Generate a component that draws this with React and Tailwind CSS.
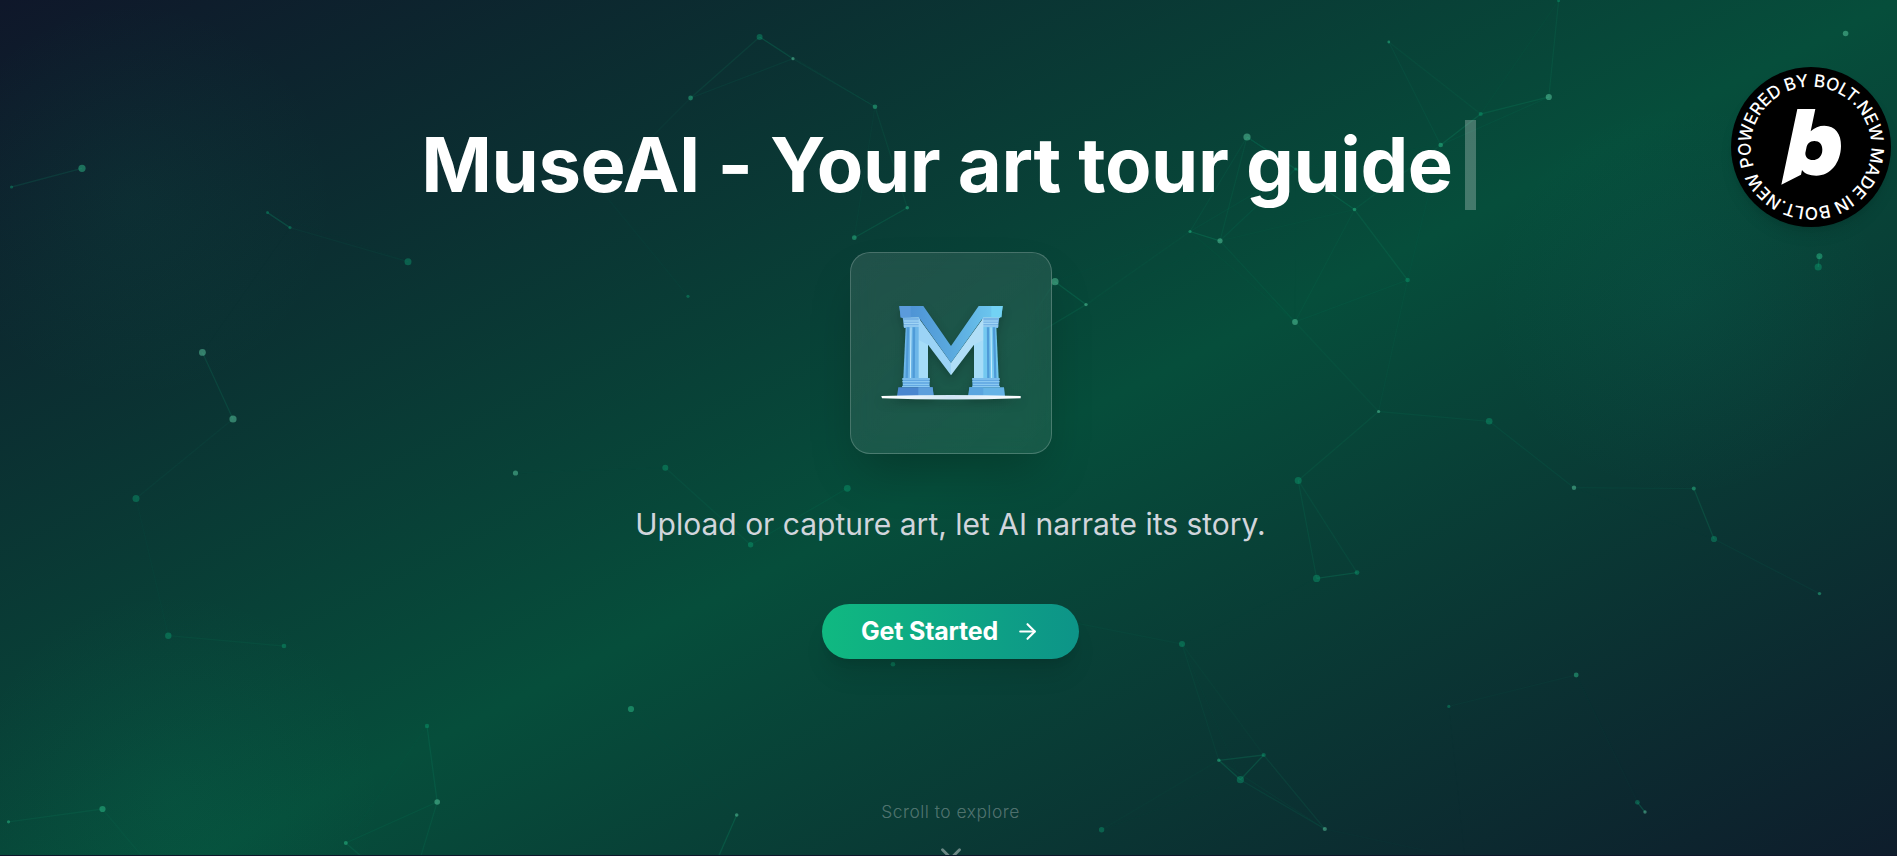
import { ArrowRight, ChevronDown } from "lucide-react";

const MINT = "#6ee7b7";
const GREEN = "#34d399";
const EMERALD = "#10b981";

// x, y, radius, color
const particles = [
  [11.5, 187, 1.6, EMERALD],
  [82, 168.3, 3.6, GREEN],
  [267.5, 212.6, 1.5, EMERALD],
  [290, 227.6, 1.6, EMERALD],
  [408, 261.7, 3.5, EMERALD],
  [202.4, 352.4, 3.4, MINT],
  [233, 419, 3.6, MINT],
  [136, 498.4, 3.5, EMERALD],
  [168.3, 635.7, 3.2, EMERALD],
  [284, 646, 2.3, EMERALD],
  [515.5, 473, 2.6, MINT],
  [631, 709, 3.1, GREEN],
  [427, 726, 2.2, EMERALD],
  [437.2, 802, 2.8, MINT],
  [345.8, 843, 2, GREEN],
  [102.5, 809, 3.1, GREEN],
  [8.5, 821.8, 1.6, GREEN],
  [408.6, 897, 2, EMERALD],
  [186, 909, 2, EMERALD],
  [759.6, 37, 3, EMERALD],
  [793, 58.7, 1.6, MINT],
  [690.6, 98, 2.4, GREEN],
  [875, 106.7, 2.3, GREEN],
  [907.3, 207.7, 1.8, GREEN],
  [854.3, 237.7, 2.4, GREEN],
  [688, 296.3, 1.6, EMERALD],
  [600, 189, 2, EMERALD],
  [1247, 137, 3.6, MINT],
  [1190, 231.5, 1.6, GREEN],
  [1220, 240.8, 2.6, MINT],
  [1055, 281.7, 3.6, MINT],
  [1086, 304.6, 1.7, MINT],
  [1010, 350, 2, EMERALD],
  [665.3, 467.7, 3, EMERALD],
  [847.3, 488.3, 3.4, EMERALD],
  [750.6, 544.7, 2.7, EMERALD],
  [893, 664.3, 2.3, EMERALD],
  [1182, 644, 3, EMERALD],
  [1050, 618, 2, EMERALD],
  [1218.8, 760.3, 1.7, GREEN],
  [1263.7, 755, 2.1, EMERALD],
  [1240.4, 779.7, 3.6, EMERALD],
  [1101.6, 829.7, 2.7, EMERALD],
  [736.7, 815, 1.8, MINT],
  [702, 893, 2, EMERALD],
  [698, 905, 2, EMERALD],
  [1388.8, 42, 1.4, GREEN],
  [1548.8, 97, 3.1, MINT],
  [1480.7, 114, 2.1, EMERALD],
  [1440.7, 145, 2.3, GREEN],
  [1558.6, 0.7, 1.5, EMERALD],
  [1845.6, 33.5, 2.8, MINT],
  [1295.8, 169, 1.6, EMERALD],
  [1354.5, 209.5, 1.8, GREEN],
  [1407.6, 280, 2.3, EMERALD],
  [1295, 322, 2.9, MINT],
  [1378.6, 411.5, 1.6, MINT],
  [1489.2, 421.3, 3.3, EMERALD],
  [1819.4, 256.3, 3, GREEN],
  [1818.2, 267, 3.6, EMERALD],
  [1298.2, 480.4, 3.5, EMERALD],
  [1316.6, 578.4, 3.6, EMERALD],
  [1357, 572.6, 2.4, EMERALD],
  [1574, 487.7, 2.2, MINT],
  [1693.8, 488.6, 2, GREEN],
  [1714, 539, 3.1, EMERALD],
  [1819.5, 593.6, 1.7, GREEN],
  [1576.2, 675, 2.4, GREEN],
  [1448.8, 706.4, 1.6, EMERALD],
  [1637.4, 802.3, 2.4, EMERALD],
  [1645, 812, 1.7, MINT],
  [1324.8, 829, 2.1, MINT],
  [1465, 859, 2, EMERALD],
];

const MAX_DISTANCE = 158;

const links = [];
particles.forEach(([x1, y1], i) => {
  particles.slice(i + 1).forEach(([x2, y2]) => {
    const d = Math.hypot(x1 - x2, y1 - y2);
    if (d < MAX_DISTANCE) {
      links.push({ x1, y1, x2, y2, opacity: 0.24 * (1 - d / MAX_DISTANCE) });
    }
  });
});

function ParticleField() {
  return (
    <svg className="absolute inset-0 h-full w-full" aria-hidden="true">
      {links.map(({ opacity, ...line }, i) => (
        <line key={i} {...line} stroke={EMERALD} strokeWidth="1.3" strokeOpacity={opacity} />
      ))}
      {particles.map(([x, y, r, color], i) => (
        <circle
          key={i}
          cx={x}
          cy={y}
          r={r}
          fill={color}
          fillOpacity={color === EMERALD ? 0.34 : 0.42}
        />
      ))}
    </svg>
  );
}

function Backdrop() {
  return (
    <div className="absolute inset-x-0 top-0 h-[960px] bg-[linear-gradient(to_bottom_right,#0f172a,#064e3b,#0f172a)]">
      <div className="absolute -left-[65px] top-0 h-[400px] w-[400px] rounded-full bg-[radial-gradient(closest-side,rgba(16,185,129,0.05),transparent)]" />
      <div className="absolute -left-[36px] top-[590px] h-[420px] w-[420px] rounded-full bg-[radial-gradient(closest-side,rgba(16,185,129,0.06),transparent)]" />
      <div className="absolute left-[1485px] top-[100px] h-[400px] w-[400px] rounded-full bg-[radial-gradient(closest-side,rgba(20,184,166,0.05),transparent)]" />
    </div>
  );
}

function Pillar({ fill }) {
  return (
    <>
      <path d="M188 232H240V264H192Z" fill="#78b4e6" />
      <path d="M186 232H240M192 243H237M192 250H238M191 258H238" stroke="#a9dcf8" strokeWidth="3" />
      <path d="M197 261H238L264 318V414H190Z" fill={fill} />
      <path d="M204 262L200 414M222 262L221 414" stroke="#4f9bd8" strokeWidth="7" />
      <path d="M213 262L211 414" stroke="#c4ecfd" strokeWidth="3" />
      <path d="M236 300H264V414H236Z" fill="#a5dcf8" />
      <path d="M188 414H269V442H188Z" fill="#62a8e2" />
      <path d="M186 417H270M187 425H269M189 433H267M186 440H269" stroke="#93d0f5" strokeWidth="3" />
    </>
  );
}

function MuseLogo() {
  return (
    <svg
      viewBox="120 198 426 282"
      className="h-[94px] w-[142px] overflow-visible drop-shadow-[0_4px_5px_rgba(0,0,0,0.2)]"
    >
      <defs>
        <linearGradient id="beam" x1="178" x2="488" y1="0" y2="0" gradientUnits="userSpaceOnUse">
          <stop offset="0" stopColor="#4b8ed3" />
          <stop offset="0.5" stopColor="#5aa9de" />
          <stop offset="1" stopColor="#70cdf2" />
        </linearGradient>
        <linearGradient id="ground" x1="0" x2="1" y1="0" y2="0">
          <stop offset="0" stopColor="#ffffff" />
          <stop offset="0.5" stopColor="#cfe6f6" />
          <stop offset="1" stopColor="#ffffff" />
        </linearGradient>
      </defs>
      <Pillar fill="#6db6e8" />
      <g transform="translate(666 0) scale(-1 1)">
        <Pillar fill="#74c8f0" />
      </g>
      {/* light underside of the V */}
      <path d="M236 234L333 368V406L264 314L236 300Z" fill="#9bd3f6" />
      <path d="M430 234L333 368V406L402 314L430 300Z" fill="#b0def7" />
      {/* beam */}
      <path
        d="M178 198H250L333 318L416 198H488L484 232H430L333 368L236 232L182 233Z"
        fill="url(#beam)"
      />
      <path d="M178 198H212V232H182Z" fill="#5b9bdc" />
      <path d="M454 198H488L484 232H454Z" fill="#72d2f4" />
      {/* plinths */}
      <path d="M175 442H278L281 468H171Z" fill="#4a86cf" />
      <path d="M235 442H278L281 468H235Z" fill="#5d9fdc" />
      <path d="M388 442H492L495 468H385Z" fill="#65b3e6" />
      <path d="M388 442H430V468H385Z" fill="#5aa5df" />
      <path d="M124 468Q330 462 542 468V475Q330 482 126 475Z" fill="url(#ground)" />
    </svg>
  );
}

function BoltBadge() {
  return (
    <a
      href="#"
      aria-label="Powered by Bolt.new"
      className="absolute right-[6px] top-[67px] z-10 h-40 w-40 rounded-full bg-black shadow-lg"
    >
      <svg viewBox="-240 -240 480 480" className="h-full w-full">
        <defs>
          <path id="ring" d="M-171 58A180.5 180.5 0 1 1 171 -58A180.5 180.5 0 1 1 -171 58" />
        </defs>
        <text
          fill="#fff"
          fontSize="52"
          fontWeight="550"
          className="font-['Inter',sans-serif]"
        >
          <textPath href="#ring" textLength="1120" lengthAdjust="spacing">
            POWERED BY BOLT.NEW MADE IN BOLT.NEW
          </textPath>
        </text>
        <path
          transform="translate(-342 -321)"
          fill="#fff"
          fillRule="evenodd"
          d="M301 207H355L341 274Q358 257 382 257C415 257 433 282 432 318C431 369 400 407 358 407C338 407 323 401 315 390L312 404L253 434ZM352 303C338 303 330 312 328 325L325 339C325 353 334 360 347 360C364 360 376 347 376 329C376 313 367 303 352 303Z"
        />
      </svg>
    </a>
  );
}

export default function App() {
  return (
    <div className="h-screen overflow-hidden bg-slate-900 font-['Inter',sans-serif]">
      <section className="relative h-[855px] overflow-hidden">
        <Backdrop />
        <ParticleField />
        <BoltBadge />

        <div className="relative flex flex-col items-center pl-1 pt-[120px]">
          <h1 className="mr-1 flex items-center text-[75.9px] font-bold leading-[88px] tracking-[-0.42px] text-white">
            <span className="-mt-0.5">MuseAI - Your art tour guide</span>
            <span className="ml-3 h-[90px] w-[11px] bg-white/25" />
          </h1>

          <div className="mt-[42px] flex h-[202px] w-[202px] items-center justify-center rounded-[20px] border border-white/20 bg-linear-to-br from-white/10 to-white/[0.07] shadow-2xl backdrop-blur-md">
            <MuseLogo />
          </div>

          <p className="mt-[50px] text-[30px] leading-10 text-gray-300">
            Upload or capture art, let AI narrate its story.
          </p>

          <button className="mt-[60px] flex h-[55px] w-[257px] items-center justify-center gap-[17px] rounded-full bg-[linear-gradient(to_right,#10b981,#0d9488)] text-[25px] font-bold tracking-[-0.2px] text-white shadow-xl">
            Get Started
            <ArrowRight size={25} strokeWidth={2} />
          </button>

          <div className="mt-[141px] flex flex-col items-center text-white/30">
            <span className="text-[17.4px] font-light leading-6 tracking-[0.5px]">Scroll to explore</span>
            <ChevronDown size={34} strokeWidth={2} className="mt-[13px] text-white/40" />
          </div>
        </div>
      </section>
    </div>
  );
}
